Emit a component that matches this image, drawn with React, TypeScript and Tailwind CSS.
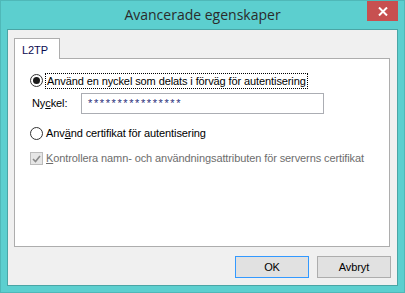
import React from 'react'

const ui = { fontFamily: '"Liberation Sans", Arial, sans-serif' }

function Radio({ checked }: { checked?: boolean }) {
  return (
    <span className="w-[13px] h-[13px] rounded-full border border-[#333] bg-white flex items-center justify-center shrink-0">
      {checked && <span className="w-[7px] h-[7px] rounded-full bg-[#1a1a1a]" />}
    </span>
  )
}

export default function App() {
  return (
    <div
      className="w-[405px] h-[293px] bg-[#5ccfcf] border border-[#4fb8b8] flex flex-col"
      style={ui}
    >
      {/* Title bar */}
      <div className="h-[28px] grid grid-cols-[1fr_auto_1fr] items-start">
        <div />
        <div
          className="pt-[3px] text-[14px] text-[#2b2b2b] leading-[22px]"
          style={{ fontFamily: '"Open Sans", "Noto Sans", sans-serif' }}
        >
          Avancerade egenskaper
        </div>
        <div className="flex justify-end pr-[6px]">
          <div className="w-[31px] h-[20px] bg-[#c75050] flex items-center justify-center">
            <svg width="10" height="9" viewBox="0 0 10 9">
              <path d="M1 0.5 L9 8.5 M9 0.5 L1 8.5" stroke="white" strokeWidth="2" />
            </svg>
          </div>
        </div>
      </div>

      {/* Client area */}
      <div className="mx-[6px] mb-[6px] flex-1 bg-[#f0f0f0] border border-[#4aa5a5] flex flex-col pl-[6px] pr-[7px] pt-[8px] text-[11px] text-black tracking-[-0.1px]">
        {/* Tab */}
        <div className="flex">
          <div className="w-[46px] h-[21px] bg-white border border-b-0 border-[#adadad] pl-[7px] pt-[3px] -mb-px relative z-10 text-[#0a0a50]">
            L2TP
          </div>
        </div>

        {/* Panel */}
        <div className="h-[189px] bg-white border border-[#adadad] pl-[15px] pt-[13px] flex flex-col">
          <div className="flex items-center gap-[2px] h-[17px]">
            <Radio checked />
            <span className="border border-dotted border-black px-px leading-[14px]">
              Använd en nyckel som delats i förväg för autentisering
            </span>
          </div>

          <div className="flex items-center mt-[4px] pl-[2px]">
            <span className="w-[49px]">
              Ny<span className="underline">c</span>kel:
            </span>
            <div className="w-[243px] h-[21px] border border-[#abadb3] flex items-center pl-[6px] text-[#2a2f7a] text-[11px] tracking-[1.6px]">
              ****************
            </div>
          </div>

          <div className="flex items-center gap-[3px] mt-[11px] h-[17px]">
            <Radio />
            <span>
              Anv<span className="underline">ä</span>nd certifikat för autentisering
            </span>
          </div>

          <div className="flex items-center gap-[3px] mt-[8px] h-[17px] text-[#6d6d6d]">
            <span className="w-[13px] h-[13px] border border-[#bcbcbc] bg-[#e6e6e6] flex items-center justify-center shrink-0">
              <svg width="9" height="8" viewBox="0 0 9 8">
                <path d="M1 4 L3.5 6.5 L8 1" stroke="#8a8a8a" strokeWidth="1.6" fill="none" />
              </svg>
            </span>
            <span>
              <span className="underline">K</span>ontrollera namn- och användningsattributen för serverns certifikat
            </span>
          </div>
        </div>

        {/* Buttons */}
        <div className="flex justify-end gap-[8px] mt-[9px] -mr-[1px]">
          <button className="w-[74px] h-[22px] bg-[#e1e1e1] border border-[#3399ff] text-black text-[11px]">
            OK
          </button>
          <button className="w-[74px] h-[22px] bg-[#e1e1e1] border border-[#adadad] text-black text-[11px]">
            Avbryt
          </button>
        </div>
      </div>
    </div>
  )
}
